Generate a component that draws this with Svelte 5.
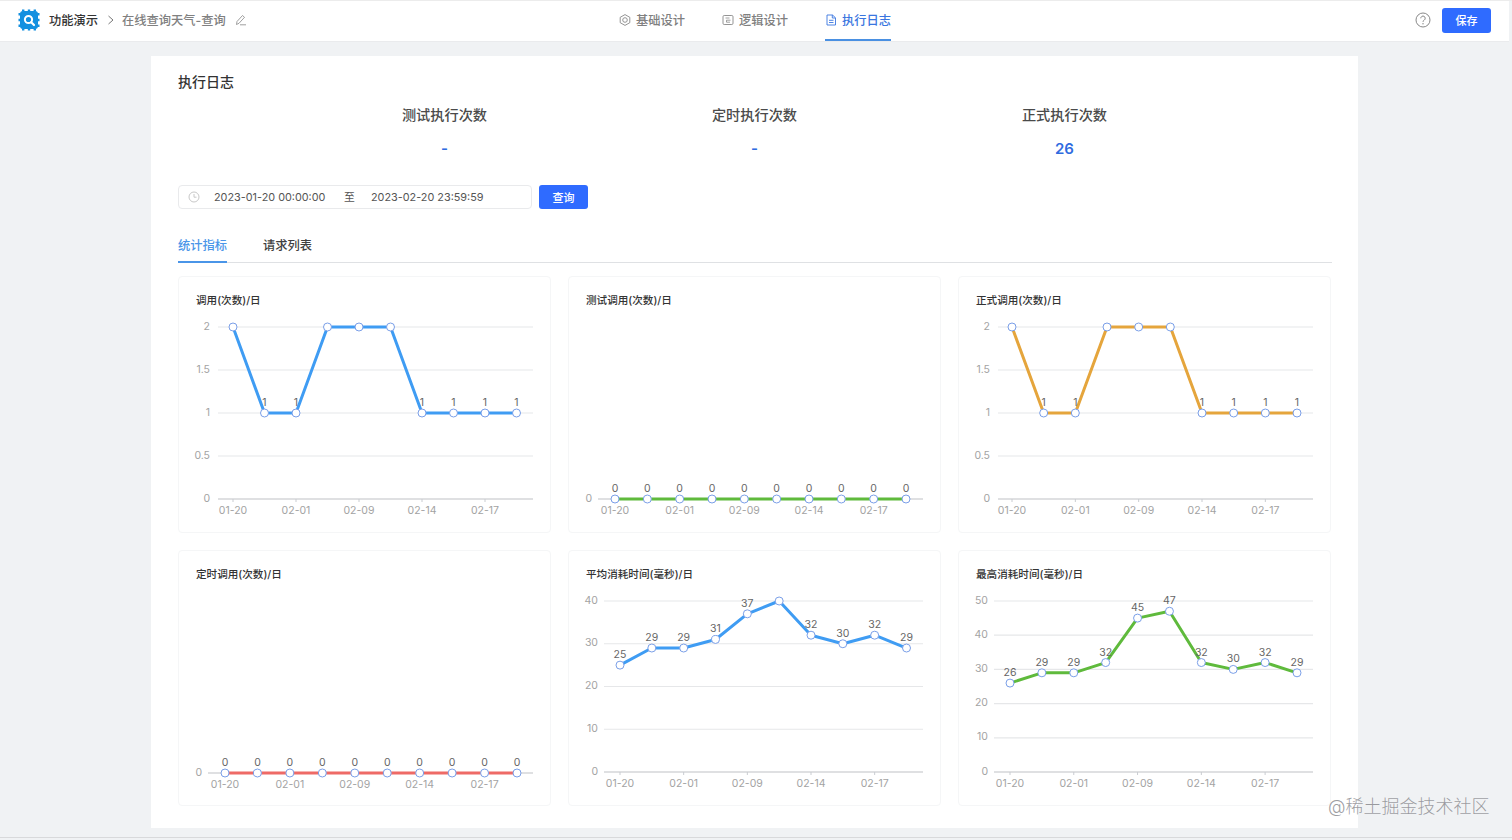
<script>
  const dates = ['01-20', '02-01', '02-09', '02-14', '02-17'];
  const blue = '#3f9cf3';
  const green = '#5fba3c';
  const orange = '#e5a53c';
  const red = '#ee6a66';
  const charts = [
    { title: '调用(次数)/日', color: blue, ticks: ['0', '0.5', '1', '1.5', '2'], max: 2, top: 15, bottom: 187, gx0: 40, gx1: 355, px0: 55, px1: 338.5, axisX: 32, data: [2, 1, 1, 2, 2, 2, 1, 1, 1, 1], hideLabel: 2 },
    { title: '测试调用(次数)/日', color: green, ticks: ['0'], max: 2, top: 15, bottom: 187, gx0: 30, gx1: 355, px0: 47, px1: 338, axisX: 24, data: [0, 0, 0, 0, 0, 0, 0, 0, 0, 0] },
    { title: '正式调用(次数)/日', color: orange, ticks: ['0', '0.5', '1', '1.5', '2'], max: 2, top: 15, bottom: 187, gx0: 40, gx1: 355, px0: 54, px1: 339, axisX: 32, data: [2, 1, 1, 2, 2, 2, 1, 1, 1, 1], hideLabel: 2 },
    { title: '定时调用(次数)/日', color: red, ticks: ['0'], max: 2, top: 15, bottom: 187, gx0: 30, gx1: 355, px0: 47, px1: 339, axisX: 24, data: [0, 0, 0, 0, 0, 0, 0, 0, 0, 0] },
    { title: '平均消耗时间(毫秒)/日', color: blue, ticks: ['0', '10', '20', '30', '40'], max: 40, top: 15, bottom: 186, gx0: 36, gx1: 355, px0: 52, px1: 338.5, axisX: 30, data: [25, 29, 29, 31, 37, 40, 32, 30, 32, 29], hideLabel: 40 },
    { title: '最高消耗时间(毫秒)/日', color: green, ticks: ['0', '10', '20', '30', '40', '50'], max: 50, top: 15, bottom: 186, gx0: 36, gx1: 355, px0: 52, px1: 339, axisX: 30, data: [26, 29, 29, 32, 45, 47, 32, 30, 32, 29] }
  ];
  const px = (c, i) => c.px0 + ((c.px1 - c.px0) * i) / 9;
  const py = (c, v) => c.bottom - ((c.bottom - c.top) * v) / c.max;
  const tickY = (c, i) => c.bottom - (c.ticks.length > 1 ? ((c.bottom - c.top) * i) / (c.ticks.length - 1) : 0);
  const points = (c) => c.data.map((v, i) => `${px(c, i)},${py(c, v)}`).join(' ');
</script>

<div class="page">
  <header class="topbar">
    <div class="crumbs">
      <svg class="logo" width="24" height="24" viewBox="0 0 24 24" aria-hidden="true">
        <rect x="3" y="3" width="18" height="18" rx="3" fill="#1490e0" />
        <g stroke="#1490e0" stroke-width="2" stroke-dasharray="2.400 3.400">
          <path d="M5 2.500h15M5 21.500h15M2.500 5v15M21.500 5v15" />
        </g>
        <circle cx="11.500" cy="11.500" r="3.600" fill="none" stroke="#fff" stroke-width="2" />
        <path d="m14.200 14.200 2.800 2.800" stroke="#fff" stroke-width="2.200" stroke-linecap="round" />
      </svg>
      <span class="app-name">功能演示</span>
      <svg class="chev" width="8" height="10" viewBox="0 0 8 10" aria-hidden="true"><path d="m1.500 1 4.500 4-4.500 4" fill="none" stroke="#777" stroke-width="1" /></svg>
      <span class="page-name">在线查询天气-查询</span>
      <svg class="edit" width="12" height="12" viewBox="0 0 12 12" aria-hidden="true"><path d="M1.500 10.500 2 7.500 7.500 1.500l2 1.800L4 9.300zM5 10.800h6" fill="none" stroke="#888" stroke-width=".8" /></svg>
    </div>
    <nav class="steps">
      <div class="step">
        <svg width="12" height="12" viewBox="0 0 12 12" aria-hidden="true"><path d="M6 .6 10.800 3.300v5.400L6 11.400 1.200 8.700V3.300z" fill="none" stroke="#888" stroke-width=".9" /><circle cx="6" cy="6" r="2.300" fill="none" stroke="#888" stroke-width=".9" /></svg>
        <span>基础设计</span>
      </div>
      <div class="step">
        <svg width="12" height="12" viewBox="0 0 12 12" aria-hidden="true"><rect x="1" y="1.500" width="10" height="9" rx="1.200" fill="none" stroke="#888" stroke-width=".9" /><path d="M3.500 4h4M8.500 6.200h-4v2h3.500" fill="none" stroke="#888" stroke-width=".8" /></svg>
        <span>逻辑设计</span>
      </div>
      <div class="step active">
        <svg width="12" height="12" viewBox="0 0 12 12" aria-hidden="true"><path d="M2 1h5.500L10.500 3.800V11H2zM7.300 1v3h3M4 6.300h4.500M4 8.500h4.500" fill="none" stroke="#3a76e0" stroke-width=".9" /></svg>
        <span>执行日志</span>
      </div>
    </nav>
    <div class="actions">
      <svg width="16" height="16" viewBox="0 0 16 16" aria-hidden="true"><circle cx="8" cy="8" r="7" fill="none" stroke="#888" stroke-width="1" /><path d="M5.800 6.300a2.200 2.200 0 1 1 3.400 1.800c-.8.500-1.200.900-1.200 1.700" fill="none" stroke="#888" stroke-width="1" /><circle cx="8" cy="11.800" r=".7" fill="#888" /></svg>
      <button class="primary save">保存</button>
    </div>
  </header>

  <main class="panel">
    <h1>执行日志</h1>
    <section class="stats">
      <div class="stat"><div class="stat-label">测试执行次数</div><div class="stat-value">-</div></div>
      <div class="stat"><div class="stat-label">定时执行次数</div><div class="stat-value">-</div></div>
      <div class="stat"><div class="stat-label">正式执行次数</div><div class="stat-value">26</div></div>
    </section>
    <div class="query">
      <div class="range">
        <svg width="12" height="12" viewBox="0 0 12 12" aria-hidden="true"><circle cx="6" cy="6" r="5" fill="none" stroke="#c8c8c8" stroke-width="1" /><path d="M6 3v3.200h2.500" fill="none" stroke="#c8c8c8" stroke-width="1" /></svg>
        <span class="from">2023-01-20 00:00:00</span>
        <span class="to-sep">至</span>
        <span class="to">2023-02-20 23:59:59</span>
      </div>
      <button class="primary search">查询</button>
    </div>
    <div class="tabs">
      <div class="tab current">统计指标</div>
      <div class="tab">请求列表</div>
    </div>
    <section class="grid">
      {#each charts as c}
        <article class="card">
          <h2>{c.title}</h2>
          <svg class="chart" viewBox="0 0 373 220" width="373" height="220">
            {#each c.ticks as t, i}
              <line x1={c.gx0} x2={c.gx1} y1={tickY(c, i)} y2={tickY(c, i)} stroke={i === 0 ? '#bfc2c6' : '#e6e7e9'} stroke-width="1.200" />
              <text class="axis" x={c.axisX} y={tickY(c, i) + 2.500} text-anchor="end">{t}</text>
            {/each}
            {#each dates as d, i}
              <line x1={px(c, i * 2)} x2={px(c, i * 2)} y1={c.bottom} y2={c.bottom + 3} stroke="#c9ccd1" />
              <text class="axis" x={px(c, i * 2)} y={c.bottom + 15} text-anchor="middle">{d}</text>
            {/each}
            <polyline points={points(c)} fill="none" stroke={c.color} stroke-width="3" stroke-linejoin="round" />
            {#each c.data as v, i}
              {#if v !== c.hideLabel}
                <text class="val" x={px(c, i)} y={py(c, v) - 7} text-anchor="middle">{v}</text>
              {/if}
            {/each}
            {#each c.data as v, i}
              <circle cx={px(c, i)} cy={py(c, v)} r="4" fill="#fff" stroke="#7a9fe8" stroke-width="1" />
            {/each}
          </svg>
        </article>
      {/each}
    </section>
  </main>
  <div class="watermark">@稀土掘金技术社区</div>
</div>

<style>
  :global(body) {
    margin: 0;
    overflow: hidden;
    background: #f0f2f4;
    font-family: Inter, "Noto Sans CJK SC", sans-serif;
  }
  .page {
    position: relative;
    height: 838px;
    border-top: 1px solid #ececec;
    border-bottom: 1px solid #d8d9db;
    box-sizing: border-box;
    display: flex;
    flex-direction: column;
    margin-bottom: 2px;
  }
  .topbar {
    height: 40px;
    background: #fff;
    border-bottom: 1px solid #eaebed;
    margin-right: 3px;
    display: grid;
    grid-template-columns: 1fr auto 1fr;
    align-items: center;
    padding: 0 17px;
    flex: none;
  }
  .crumbs {
    display: flex;
    align-items: center;
    font-size: 12.250px;
    padding-bottom: 2px;
  }
  .crumbs span, .step span { margin-bottom: 1px; }
  .logo { margin-right: 8px; }
  .app-name { color: #333; font-weight: 500; }
  .chev { margin: 0 7px 0 9px; }
  .page-name { color: #808080; font-weight: 500; }
  .edit { margin-left: 9px; }
  .steps {
    display: flex;
    gap: 37px;
    height: 100%;
    margin-left: 1px;
  }
  .step {
    display: flex;
    align-items: center;
    gap: 5px;
    font-size: 12.250px;
    font-weight: 500;
    color: #808080;
    box-sizing: border-box;
    height: 40px;
    padding-bottom: 2px;
  }
  .step.active {
    color: #3a76e0;
    border-bottom: 2px solid #4a90e2;
    padding-bottom: 0;
  }
  .actions {
    display: flex;
    align-items: center;
    justify-content: flex-end;
    gap: 11px;
    padding-bottom: 2px;
    margin-right: 1px;
  }
  .primary {
    background: #2f6bff;
    color: #fff;
    border: 0;
    border-radius: 3px;
    font: 500 11px Inter, "Noto Sans CJK SC", sans-serif;
    height: 24px;
    width: 49px;
    padding: 0;
  }
  .save { height: 25px; }
  .panel {
    width: 1207px;
    height: 772px;
    margin: 14px 0 0 151px;
    padding: 15px 26px 0 27px;
    box-sizing: border-box;
    background: #fff;
    flex: none;
  }
  h1 {
    margin: 0;
    font-size: 14px;
    font-weight: 500;
    line-height: 22px;
    color: #333;
  }
  .stats {
    display: grid;
    grid-template-columns: repeat(3, 310px);
    margin: 11px 0 0 111.500px;
  }
  .stat { text-align: center; }
  .stat-label {
    font-size: 14.200px;
    font-weight: 500;
    line-height: 22px;
    color: #4a4a4a;
  }
  .stat-value {
    font-size: 15px;
    font-weight: 600;
    line-height: 22px;
    margin-top: 12px;
    color: #2f6bdf;
  }
  .query {
    display: flex;
    gap: 8px;
    margin-top: 25px;
  }
  .range {
    width: 354px;
    height: 24px;
    box-sizing: border-box;
    border: 1px solid #e9eaec;
    border-radius: 4px;
    display: flex;
    align-items: center;
    padding-left: 9px;
    font-size: 10.850px;
    color: #555;
  }
  .from { margin-left: 14px; width: 112px; white-space: nowrap; }
  .to-sep { margin-left: 18px; width: 27px; margin-bottom: 2px; }
  .to { white-space: nowrap; }
  .search { margin-left: -1px; }
  .tabs {
    display: flex;
    gap: 36px;
    margin-top: 26px;
    border-bottom: 1px solid #dfe1e4;
    width: 1154px;
    height: 27px;
  }
  .tab {
    font-size: 12.250px;
    font-weight: 500;
    color: #3f3f3f;
    line-height: 22px;
    height: 27px;
    box-sizing: border-box;
  }
  .tab.current {
    color: #4a95e8;
    border-bottom: 2px solid #4a95e8;
    height: 28px;
  }
  .grid {
    display: grid;
    grid-template-columns: repeat(3, 373px);
    grid-template-rows: 257px 256px;
    gap: 17px;
    margin-top: 13px;
  }
  .card {
    border: 1px solid #f5f6f7;
    border-radius: 4px;
    box-sizing: border-box;
    overflow: hidden;
    margin: 0;
  }
  h2 {
    margin: 0;
    padding: 17px 0 0 17px;
    height: 18px;
    font-size: 10.600px;
    font-weight: 500;
    line-height: 14px;
    color: #333;
    box-sizing: content-box;
  }
  .chart {
    display: block;
    margin-left: -1px;
  }
  .axis {
    font-size: 10.500px;
    fill: #a3a3a3;
  }
  .val {
    font-size: 10.500px;
    fill: #666;
  }
  .watermark {
    position: absolute;
    left: 1328px;
    top: 794px;
    font-size: 18px;
    font-weight: 300;
    line-height: 24px;
    color: rgba(120, 120, 125, 0.72);
    white-space: nowrap;
  }
</style>
